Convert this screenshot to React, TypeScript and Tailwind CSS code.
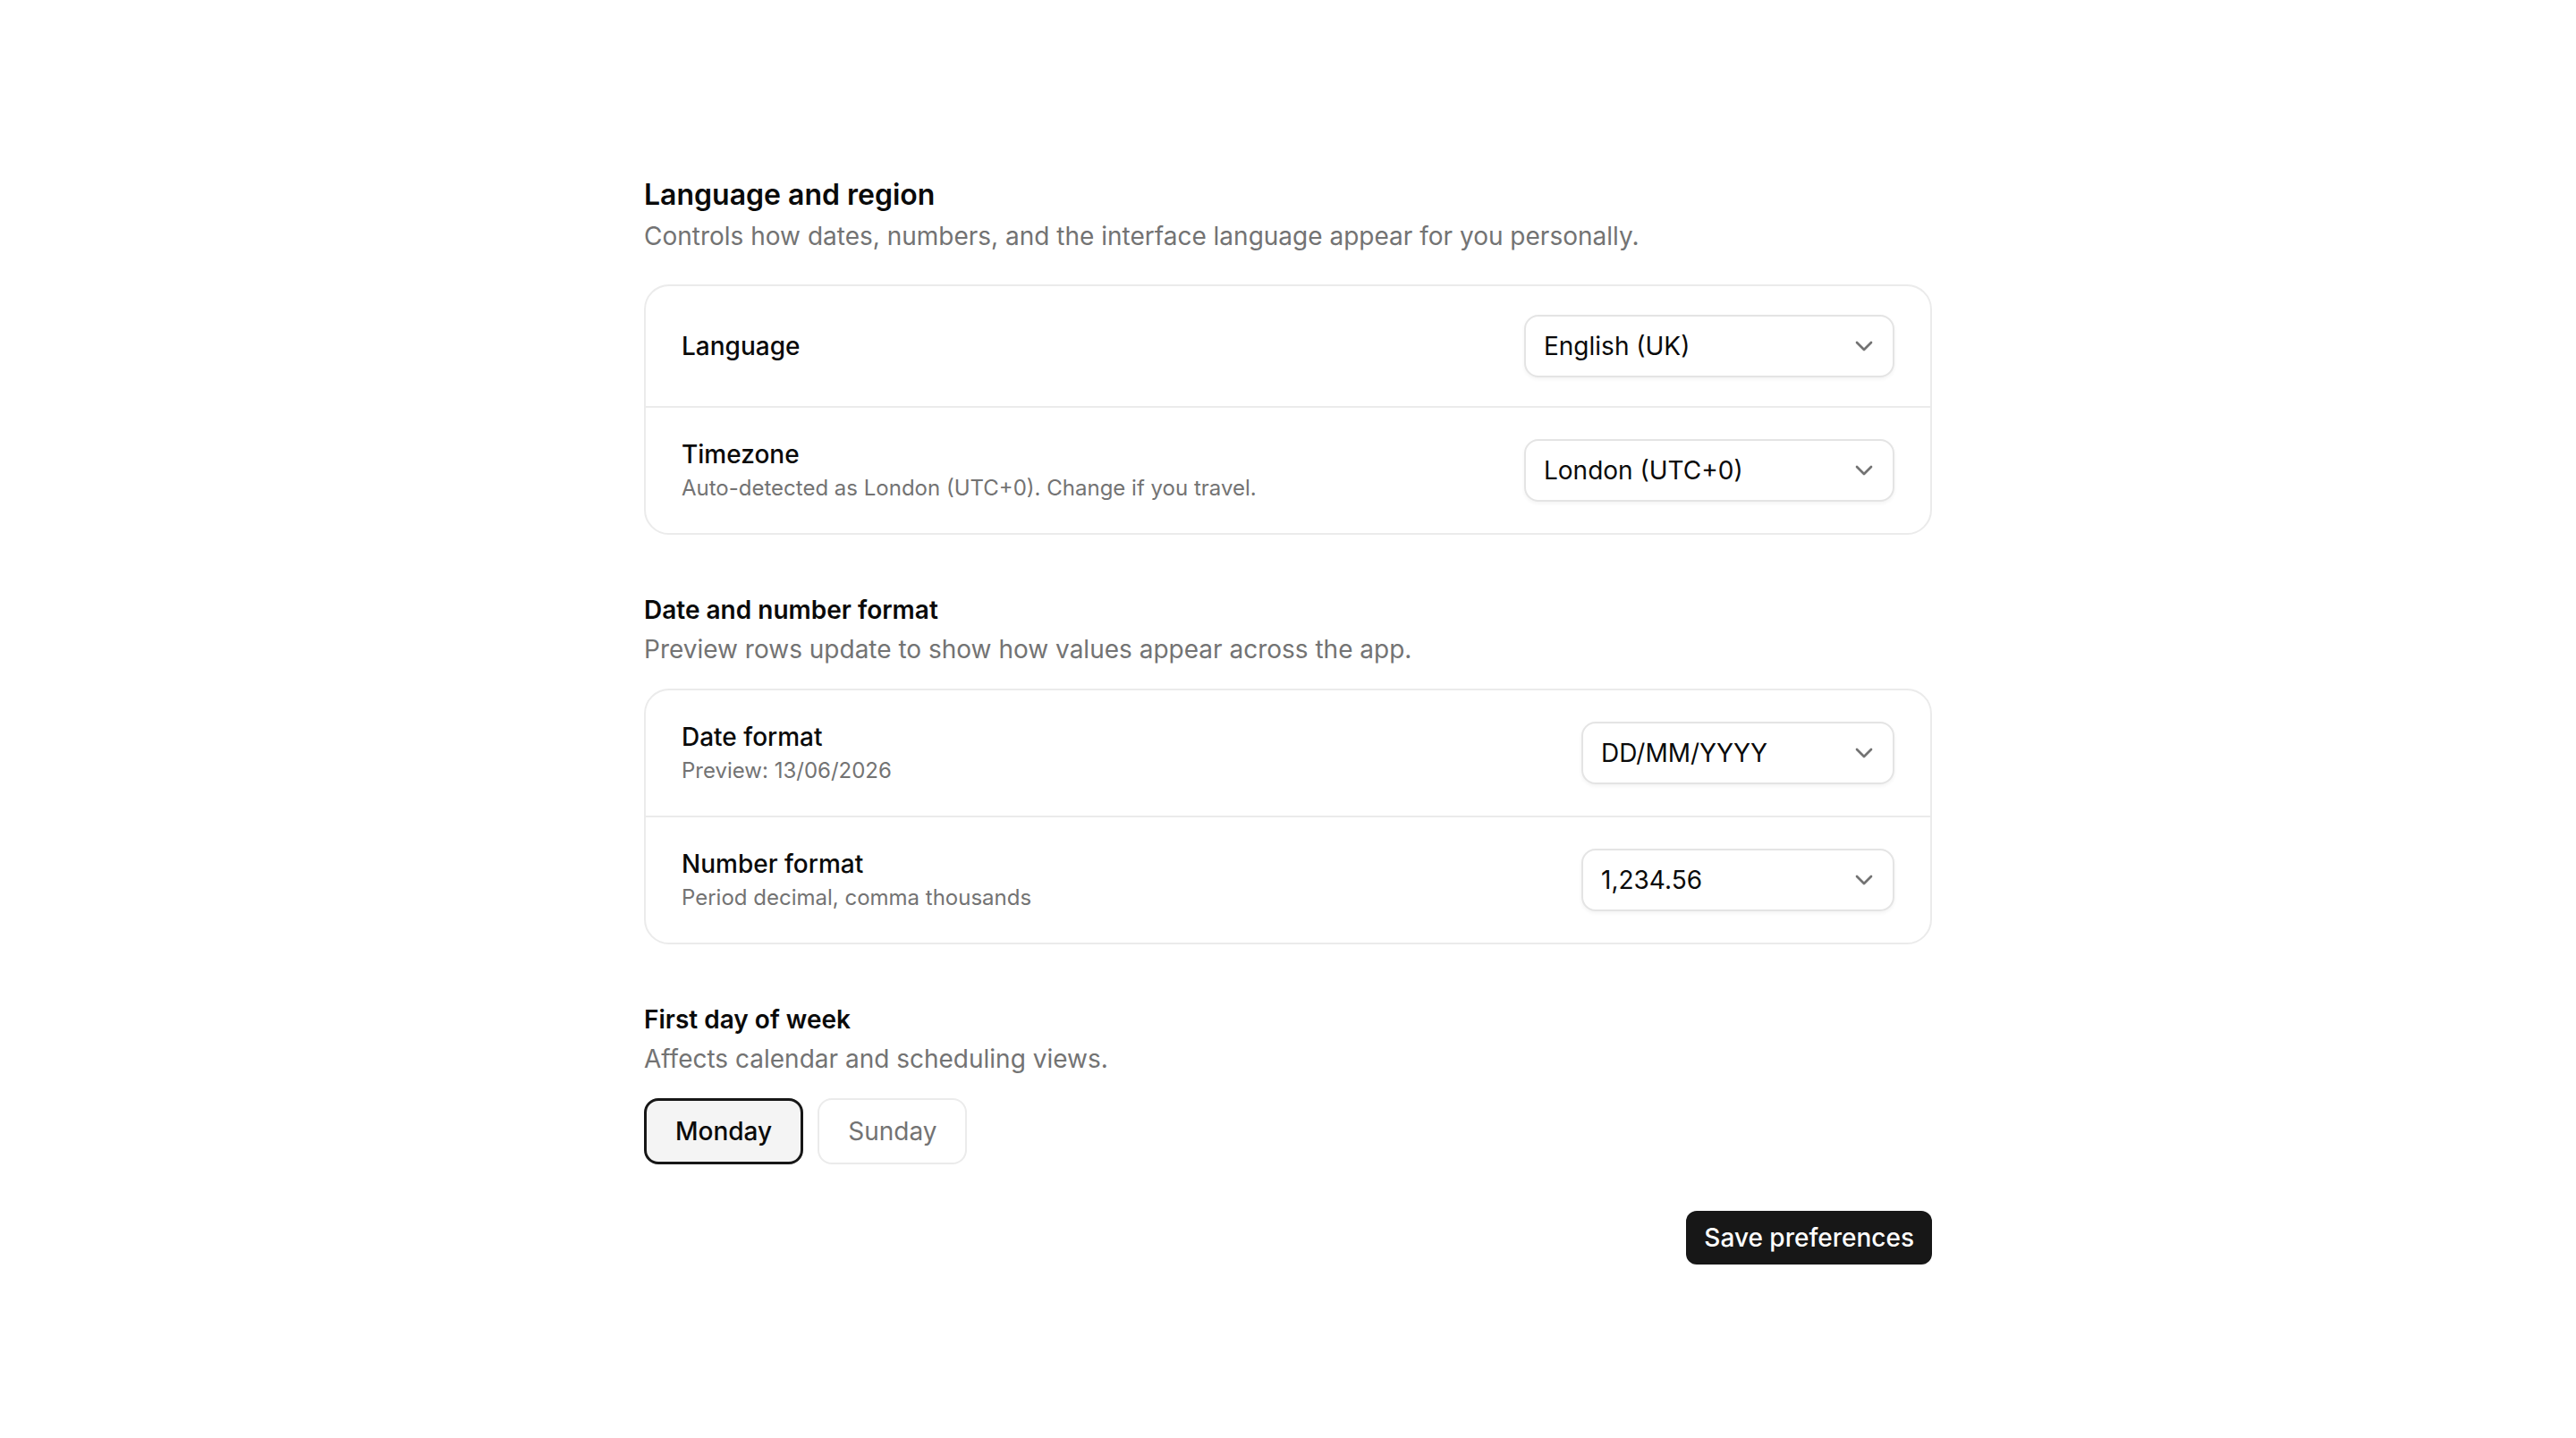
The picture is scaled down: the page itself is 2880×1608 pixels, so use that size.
import React, { useState } from 'react';
import { ChevronDown } from 'lucide-react';

interface SelectProps {
  value: string;
  width: string;
}

const Select: React.FC<SelectProps> = ({ value, width }) => (
  <button
    type="button"
    className={`${width} flex h-[70px] shrink-0 items-center justify-between rounded-2xl border-2 border-[#e4e4e4] bg-white pl-5 pr-4 text-[28px] text-[#0a0a0a] shadow-[0_2px_4px_rgba(0,0,0,0.05)]`}
  >
    <span>{value}</span>
    <ChevronDown size={32} strokeWidth={2} className="text-[#737373]" />
  </button>
);

interface RowProps {
  label: string;
  help?: string;
  value: string;
  width: string;
  first?: boolean;
}

const Row: React.FC<RowProps> = ({ label, help, value, width, first }) => (
  <div className={`flex items-center justify-between gap-12 px-10 py-8 ${first ? '' : 'border-t-2 border-[#ebebeb]'}`}>
    <div className="flex flex-col">
      <span className="text-[28px] font-medium leading-10 text-[#0a0a0a]">{label}</span>
      {help && <span className="text-[24px] leading-9 text-[#737373]">{help}</span>}
    </div>
    <Select value={value} width={width} />
  </div>
);

export default function App() {
  const [firstDay, setFirstDay] = useState<'Monday' | 'Sunday'>('Monday');

  return (
    <div className="min-h-screen bg-white font-['Inter',sans-serif] text-[#0a0a0a] antialiased">
      <div className="mx-auto max-w-[1440px] pt-[194px] pb-48">
        <section>
          <h2 className="text-[32px] font-semibold leading-[48px]">Language and region</h2>
          <p className="mt-[2px] text-[28px] leading-10 text-[#737373]">
            Controls how dates, numbers, and the interface language appear for you personally.
          </p>
          <div className="mt-[34px] rounded-[28px] border-2 border-[#ebebeb] bg-white">
            <Row first label="Language" value="English (UK)" width="w-[414px]" />
            <Row
              label="Timezone"
              help="Auto-detected as London (UTC+0). Change if you travel."
              value="London (UTC+0)"
              width="w-[414px]"
            />
          </div>
        </section>

        <section className="mt-16">
          <h2 className="text-[28px] font-semibold leading-10">Date and number format</h2>
          <p className="mt-1 text-[28px] leading-10 text-[#737373]">
            Preview rows update to show how values appear across the app.
          </p>
          <div className="mt-6 rounded-[28px] border-2 border-[#ebebeb] bg-white">
            <Row first label="Date format" help="Preview: 13/06/2026" value="DD/MM/YYYY" width="w-[350px]" />
            <Row label="Number format" help="Period decimal, comma thousands" value="1,234.56" width="w-[350px]" />
          </div>
        </section>

        <section className="mt-16">
          <h2 className="text-[28px] font-semibold leading-10">First day of week</h2>
          <p className="mt-1 text-[28px] leading-10 text-[#737373]">Affects calendar and scheduling views.</p>
          <div className="mt-6 flex gap-4">
            {(['Monday', 'Sunday'] as const).map((day) =>
              firstDay === day ? (
                <button
                  key={day}
                  onClick={() => setFirstDay(day)}
                  className="flex h-[74px] items-center rounded-2xl border-[3px] border-[#171717] bg-[#f4f4f4] px-8 text-[28px] font-medium text-[#0a0a0a]"
                >
                  {day}
                </button>
              ) : (
                <button
                  key={day}
                  onClick={() => setFirstDay(day)}
                  className="flex h-[74px] items-center rounded-2xl border-2 border-[#ebebeb] bg-white px-8 text-[28px] text-[#737373]"
                >
                  {day}
                </button>
              )
            )}
          </div>
        </section>

        <div className="mt-[52px] flex justify-end">
          <button className="h-[60px] rounded-xl bg-[#171717] px-5 text-[28px] font-medium text-white">
            Save preferences
          </button>
        </div>
      </div>
    </div>
  );
}
